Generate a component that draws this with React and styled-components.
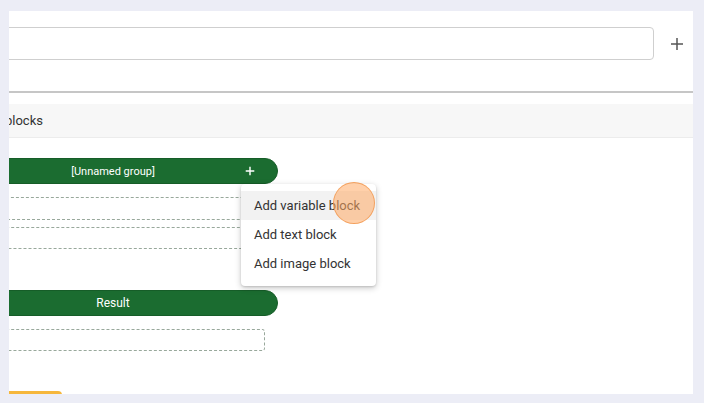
import styled, { createGlobalStyle } from 'styled-components';

const GlobalStyle = createGlobalStyle`
	html, body {
		margin: 0;
		padding: 0;
		background: #ecedf6;
		font-family: Roboto, "Liberation Sans", Arial, sans-serif;
	}
`;

const Page = styled.div`
	width: 704px;
	height: 403px;
	padding: 11px 11px 9px 9px;
	box-sizing: border-box;
	overflow: hidden;
`;

const Panel = styled.div`
	width: 684px;
	height: 383px;
	background: #ffffff;
	overflow: hidden;
`;

const Canvas = styled.div`
	position: relative;
	margin-left: -61px;
	width: calc(100% + 61px);
	padding-top: 16px;
`;

const InputRow = styled.div`
	display: flex;
	align-items: center;
	gap: 11px;
	padding-right: 4px;
	height: 33px;
`;

const Input = styled.input`
	flex: 1;
	height: 33px;
	box-sizing: border-box;
	border: 1px solid #cfcfcf;
	border-radius: 4px;
	background: #fff;
	outline: none;
`;

const IconButton = styled.button`
	width: 24px;
	height: 24px;
	padding: 0;
	border: none;
	background: none;
	display: flex;
	align-items: center;
	justify-content: center;
	color: #555;
`;

const Divider = styled.div`
	margin-top: 31px;
	height: 0;
	border-bottom: 2px solid #c6c6c6;
`;

const SectionHeader = styled.div`
	margin-top: 11px;
	height: 34px;
	box-sizing: border-box;
	display: flex;
	align-items: center;
	padding-left: 29px;
	background: #f7f7f7;
	border-bottom: 1px solid #ececec;
	font-size: 13px;
	color: #333;
`;

const Blocks = styled.div`
	padding-top: 20px;
	display: flex;
	flex-direction: column;
`;

const Group = styled.div`
	position: relative;
	display: flex;
	flex-direction: column;
	margin-bottom: ${(p) => p.$gap || 0}px;
`;

const GroupBar = styled.div`
	width: 330px;
	height: 26px;
	box-sizing: border-box;
	display: grid;
	grid-template-columns: 1fr auto 1fr;
	align-items: center;
	background: #1b6c30;
	border: 1px solid #165d28;
	border-radius: 0 13px 13px 0;
	color: #fff;
	font-size: ${(p) => p.$size || 11}px;
`;

const GroupTitle = styled.span`
	grid-column: 2;
`;

const BarAction = styled.div`
	grid-column: 3;
	justify-self: end;
	margin-right: 22px;
	display: flex;
	align-items: center;
`;

const DashedBox = styled.div`
	width: 317px;
	height: ${(p) => p.$h}px;
	box-sizing: border-box;
	margin-top: ${(p) => p.$top}px;
	border: 1px dashed #98a89b;
	border-radius: 3px;
`;

const OrangeButton = styled.div`
	width: 114px;
	height: 30px;
	margin-top: 40px;
	background: #f6b73c;
	border-radius: 4px;
`;

const Menu = styled.div`
	position: absolute;
	left: 293px;
	top: 26px;
	width: 135px;
	padding: 7px 0 8px;
	background: #fff;
	border-radius: 4px;
	box-shadow: 0 2px 6px rgba(0, 0, 0, 0.22), 0 1px 2px rgba(0, 0, 0, 0.12);
	z-index: 2;
`;

const MenuItem = styled.div`
	height: 29px;
	display: flex;
	align-items: center;
	padding-left: 13px;
	font-size: 13px;
	color: #333;
	background: ${(p) => (p.$active ? '#f2f2f2' : 'transparent')};
`;

const ClickMarker = styled.div`
	position: absolute;
	left: 385px;
	top: 24px;
	width: 42px;
	height: 42px;
	box-sizing: border-box;
	border-radius: 50%;
	background: rgba(255, 170, 100, 0.55);
	border: 1.5px solid rgba(240, 145, 70, 0.75);
	z-index: 3;
`;

const Plus = ({ size = 14, stroke = 1.5 }) => (
	<svg width={size} height={size} viewBox="0 0 14 14">
		<path d="M7 1v12M1 7h12" stroke="currentColor" strokeWidth={stroke} fill="none" />
	</svg>
);

export default function App() {
	return (
		<>
			<GlobalStyle />
			<Page>
				<Panel>
					<Canvas>
						<InputRow>
							<Input />
							<IconButton>
								<Plus />
							</IconButton>
						</InputRow>
						<Divider />
						<SectionHeader>Text blocks</SectionHeader>
						<Blocks>
							<Group $gap={41}>
								<GroupBar>
									<GroupTitle>[Unnamed group]</GroupTitle>
									<BarAction>
										<Plus size={10} stroke={2} />
									</BarAction>
								</GroupBar>
								<DashedBox $top={13} $h={23} />
								<DashedBox $top={7} $h={22} />
								<Menu>
									<MenuItem $active>Add variable block</MenuItem>
									<MenuItem>Add text block</MenuItem>
									<MenuItem>Add image block</MenuItem>
								</Menu>
								<ClickMarker />
							</Group>
							<Group>
								<GroupBar $size={12}>
									<GroupTitle>Result</GroupTitle>
								</GroupBar>
								<DashedBox $top={13} $h={22} />
							</Group>
							<OrangeButton />
						</Blocks>
					</Canvas>
				</Panel>
			</Page>
		</>
	);
}
